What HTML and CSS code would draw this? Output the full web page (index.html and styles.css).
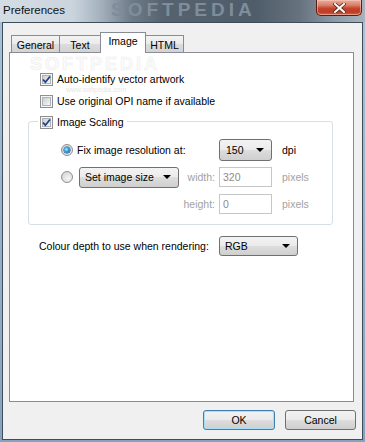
FILE: index.html
```html
<!DOCTYPE html>
<html>
<head>
<meta charset="utf-8">
<link rel="stylesheet" href="styles.css">
</head>
<body>
<div class="titlebar">
  <span class="title">Preferences</span>
  <span class="wm">SOFTPEDIA</span>
  <div class="close">
    <svg width="13" height="10" viewBox="0 0 13 10"><path d="M2 1 L11 9 M11 1 L2 9" stroke="#5a2a22" stroke-width="3.6" stroke-linecap="square"/><path d="M2 1 L11 9 M11 1 L2 9" stroke="#fff" stroke-width="2" stroke-linecap="square"/></svg>
  </div>
</div>
<div class="client">
  <div class="tabs">
    <div class="tab t-general">General</div>
    <div class="tab t-text">Text</div>
    <div class="tab active t-image">Image</div>
    <div class="tab t-html">HTML</div>
  </div>
  <div class="panel">
    <span class="pwm">SOFTPEDIA</span>
    <span class="pwm-small">www.softpedia.com</span>
    <div class="check-row"><span class="cb checked"><svg width="9" height="9" viewBox="0 0 9 9"><path d="M1 4.5 L3.4 7.2 L8 1.5" fill="none" stroke="#243f86" stroke-width="1.8"/></svg></span>Auto-identify vector artwork</div>
    <div class="check-row"><span class="cb"></span>Use original OPI name if available</div>
    <div class="group">
      <div class="legend"><span class="cb checked"><svg width="9" height="9" viewBox="0 0 9 9"><path d="M1 4.5 L3.4 7.2 L8 1.5" fill="none" stroke="#243f86" stroke-width="1.8"/></svg></span>Image Scaling</div>
      <div class="grid">
        <span class="rb on"></span>
        <span class="lbl span2">Fix image resolution at:</span>
        <span class="dd dd-150">150<i class="arrow"></i></span>
        <span class="unit">dpi</span>

        <span class="rb"></span>
        <span class="dd dd-size">Set image size<i class="arrow"></i></span>
        <span class="dis lbl-r">width:</span>
        <span class="inp">320</span>
        <span class="unit dis">pixels</span>

        <span></span>
        <span></span>
        <span class="dis lbl-r">height:</span>
        <span class="inp">0</span>
        <span class="unit dis">pixels</span>
      </div>
    </div>
    <div class="depth-row">
      <span class="depth-lbl">Colour depth to use when rendering:</span>
      <span class="dd dd-rgb">RGB<i class="arrow"></i></span>
    </div>
  </div>
  <div class="buttons">
    <span class="btn default">OK</span>
    <span class="btn cancel">Cancel</span>
  </div>
</div>
</body>
</html>
```

FILE: styles.css
```css
* { box-sizing: border-box; }
html, body { margin: 0; padding: 0; }
body {
  width: 365px;
  height: 442px;
  overflow: hidden;
  background: linear-gradient(180deg, #a9c2d7 0%, #93afc8 60%, #86a3bd 100%);
  font-family: "Liberation Sans", Arial, sans-serif;
  font-size: 10.5px;
  color: #000;
}

/* title bar */
.titlebar {
  height: 22px;
  display: flex;
  align-items: flex-start;
  background: linear-gradient(90deg, #d5dde4 0%, #cad4dd 20%, #a2afbb 28%, #6d7b88 36%, #56636f 45%, #4f5c69 70%, #66737f 82%, #8e9ba6 92%, #a7b3bd 100%);
}
.title {
  padding-left: 3px;
  font-size: 11.5px;
  line-height: 20px;
  color: #111;
}
.wm {
  margin-left: 46px;
  flex-shrink: 0;
  white-space: nowrap;
  font-size: 19px;
  font-weight: bold;
  letter-spacing: 4px;
  line-height: 19px;
  color: #7f8d9b;
}
.close {
  margin-left: auto;
  margin-right: 3px;
  width: 46px;
  height: 16px;
  border: 1px solid #5d1d14;
  border-top: none;
  border-radius: 0 0 5px 5px;
  background: linear-gradient(180deg, #e9ae9e 0%, #d9806a 35%, #c6432c 55%, #bf3b24 80%, #d0654b 100%);
  display: flex;
  align-items: center;
  justify-content: center;
  box-shadow: inset 0 0 0 1px rgba(255,210,200,0.5);
}

/* client area */
.client {
  margin-left: 2px;
  width: 361px;
  height: 418px;
  border: 1px solid #3f4d5a;
  background: #f0f0f0;
  padding-top: 9px;
}

.tabs {
  display: flex;
  align-items: flex-end;
  height: 20px;
  padding-left: 8px;
  position: relative;
  z-index: 1;
}
.tab {
  height: 17px;
  border-top: 1px solid #898c95;
  border-left: 1px solid #898c95;
  background: linear-gradient(180deg, #f3f3f3 0%, #ebebeb 50%, #dcdcdc 51%, #d3d3d3 100%);
  display: flex;
  align-items: center;
  justify-content: center;
  padding-top: 1px;
  color: #000;
}
.t-general { width: 48px; }
.t-text { width: 41px; }
.t-image { width: 46px; }
.t-html { width: 38px; border-left: none; border-right: 1px solid #898c95; }
.tab.active {
  height: 21px;
  margin-bottom: -1px;
  background: #fff;
  border-right: 1px solid #898c95;
  padding-top: 0;
  padding-bottom: 4px;
}

.panel {
  position: relative;
  margin-left: 6px;
  width: 345px;
  height: 350px;
  border: 1px solid #898c95;
  background: #fff;
  padding: 15px 0 0 18px;
}
.pwm {
  position: absolute;
  left: 20px;
  top: 2px;
  font-size: 18px;
  line-height: 18px;
  letter-spacing: 3px;
  color: #fbfbfb;
  -webkit-text-stroke: 0.5px #ececec;
  font-weight: bold;
}
.pwm-small {
  position: absolute;
  left: 56px;
  top: 33px;
  font-size: 7px;
  line-height: 8px;
  color: #e6e6e6;
}

.check-row {
  position: relative;
  height: 22px;
  display: flex;
  align-items: center;
  padding-left: 12px;
}
.cb {
  position: relative;
  width: 13px;
  height: 13px;
  flex-shrink: 0;
  margin-right: 4px;
  border: 1px solid #8e8f8f;
  background: #f6f6f6;
}
.cb::before {
  content: "";
  position: absolute;
  left: 1px; top: 1px; right: 1px; bottom: 1px;
  border: 1px solid #aeb3b9;
  background: linear-gradient(135deg, #c9cdd3 0%, #e4e6e9 60%, #f7f7f7 100%);
}
.cb svg {
  position: absolute;
  left: 1px;
  top: 1px;
}

.group {
  margin-top: 9px;
  width: 305px;
  border: 1px solid #d5dfe5;
  border-radius: 3px;
  padding-bottom: 10px;
}
.legend {
  display: flex;
  align-items: center;
  width: fit-content;
  height: 16px;
  margin-top: -8px;
  margin-left: 9px;
  padding: 0 3px 0 2px;
  background: #fff;
}

.grid {
  margin-top: 9px;
  padding-left: 32px;
  display: grid;
  grid-template-columns: 16px 104px 38px 63px auto;
  grid-template-rows: 22px 22px 21px;
  row-gap: 5px;
  align-items: center;
}
.span2 { grid-column: 2 / span 2; }
.lbl-r { text-align: right; padding-right: 4px; }
.dis { color: #a2a2a2; }

.rb {
  position: relative;
  width: 12px;
  height: 12px;
  border-radius: 50%;
  border: 1px solid #8e8f8f;
  background: radial-gradient(circle at 65% 65%, #f4f4f4 0%, #d8dbdf 70%, #c6cace 100%);
}
.rb.on::after {
  content: "";
  position: absolute;
  left: 2px; top: 2px;
  width: 6px; height: 6px;
  border-radius: 50%;
  background: radial-gradient(circle at 40% 40%, #b8ecff 0%, #2a9be0 45%, #1a4f95 100%);
  box-shadow: 0 0 0 0.5px #1c3f7a;
}

.dd {
  position: relative;
  display: flex;
  align-items: center;
  border: 1px solid #707070;
  border-radius: 3px;
  background: linear-gradient(180deg, #f3f3f3 0%, #ebebeb 49%, #dddddd 50%, #cfcfcf 100%);
  padding-left: 6px;
}
.arrow {
  position: absolute;
  right: 7px;
  top: 50%;
  margin-top: -2px;
  width: 0;
  height: 0;
  border-left: 4px solid transparent;
  border-right: 4px solid transparent;
  border-top: 4px solid #000;
}
.dd-150 { width: 53px; height: 22px; padding-left: 6px; }
.dd-size { width: 100px; height: 21px; margin-left: 2px; padding-left: 5px; }
.dd-rgb { width: 79px; height: 20px; padding-left: 5px; }

.inp {
  width: 53px;
  height: 20px;
  border: 1px solid #c3c7ca;
  background: #fff;
  color: #8f8a84;
  display: flex;
  align-items: center;
  padding-left: 3px;
}

.depth-row {
  margin-top: 11px;
  padding-left: 11px;
  display: flex;
  align-items: center;
  height: 20px;
}
.depth-lbl { width: 180px; flex-shrink: 0; }

.buttons {
  margin-top: 8px;
  display: flex;
  justify-content: flex-end;
  gap: 10px;
  padding-right: 6px;
}
.btn {
  height: 20px;
  display: flex;
  align-items: center;
  justify-content: center;
  border: 1px solid #707070;
  border-radius: 3px;
  background: linear-gradient(180deg, #f2f2f2 0%, #ebebeb 49%, #dddddd 50%, #cfcfcf 100%);
}
.btn.default {
  width: 72px;
  border-color: #3c7fb1;
  box-shadow: inset 0 0 0 1px #a6e0f6;
}
.btn.cancel { width: 71px; }
```
